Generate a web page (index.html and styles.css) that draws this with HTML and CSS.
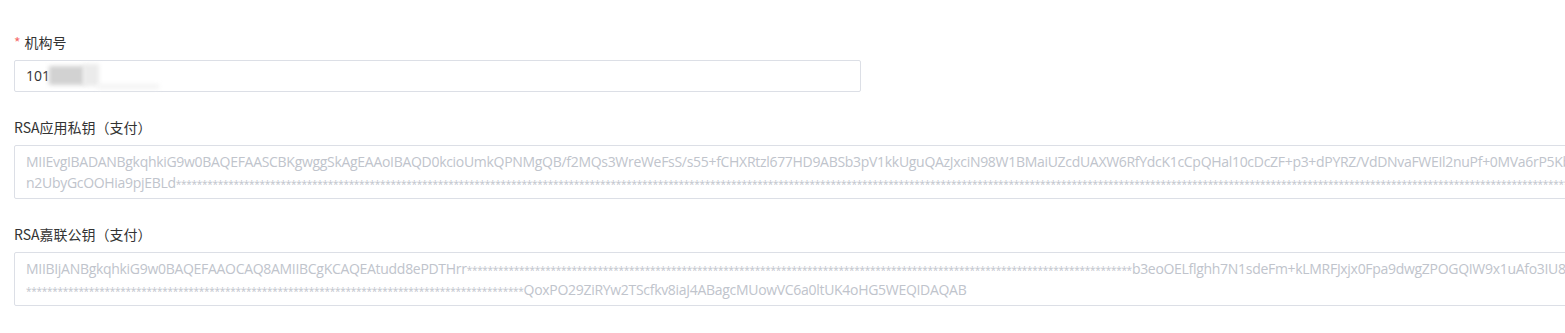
FILE: index.html
```html
<!DOCTYPE html>
<html lang="zh-CN">
<head>
<meta charset="utf-8">
<title>配置</title>
<link rel="stylesheet" href="styles.css">
</head>
<body>
<form class="form">
  <div class="form-item">
    <label class="label"><span class="required">*</span>机构号</label>
    <div class="input">
      <span class="value">101</span>
      <span class="mosaic mosaic-a"></span>
      <span class="mosaic mosaic-b"></span>
      <span class="mosaic mosaic-c"></span>
    </div>
  </div>
  <div class="form-item">
    <label class="label">RSA应用私钥（支付）</label>
    <div class="textarea">
      <div class="line">MIIEvgIBADANBgkqhkiG9w0BAQEFAASCBKgwggSkAgEAAoIBAQD0kcioUmkQPNMgQB/f2MQs3WreWeFsS/s55+fCHXRtzl677HD9ABSb3pV1kkUguQAzJxciN98W1BMaiUZcdUAXW6RfYdcK1cCpQHal10cDcZF+p3+dPYRZ/VdDNvaFWEIl2nuPf+0MVa6rP5KbQm3Yt</div>
      <div class="line">n2UbyGcOOHia9pjEBLd<span class="mask">************************************************************************************************************************************************************************************************************************************************************************************************************************************</span></div>
    </div>
  </div>
  <div class="form-item">
    <label class="label">RSA嘉联公钥（支付）</label>
    <div class="textarea">
      <div class="line">MIIBIjANBgkqhkiG9w0BAQEFAAOCAQ8AMIIBCgKCAQEAtudd8ePDTHrr<span class="mask">*******************************************************************************************************************************</span>b3eoOELflghh7N1sdeFm+kLMRFJxjx0Fpa9dwgZPOGQIW9x1uAfo3IU8<span class="mask">**********************************</span></div>
      <div class="line"><span class="mask">***********************************************************************************************</span>QoxPO29ZiRYw2TScfkv8iaJ4ABagcMUowVC6a0ltUK4oHG5WEQIDAQAB</div>
    </div>
  </div>
</form>
</body>
</html>
```

FILE: styles.css
```css
*, *::before, *::after {
  box-sizing: border-box;
}

html, body {
  margin: 0;
  padding: 0;
  background: #ffffff;
  overflow: hidden;
}

body {
  font-family: "Open Sans", "Noto Sans CJK SC", sans-serif;
  font-size: 14px;
  color: #333333;
}

.form {
  padding: 32px 0 0 14px;
  display: flex;
  flex-direction: column;
  gap: 25px;
}

.form-item {
  display: flex;
  flex-direction: column;
  gap: 8px;
}

.label {
  line-height: 20px;
  height: 20px;
  font-family: "Noto Sans CJK SC", sans-serif;
  color: #333333;
}

.required {
  color: #f56c6c;
  margin-right: 4px;
}

.input {
  position: relative;
  width: 847px;
  height: 32px;
  line-height: 30px;
  border: 1px solid #dcdfe6;
  border-radius: 2px;
  padding: 0 11px;
  color: #333333;
}

.value {
  font-family: "Open Sans", sans-serif;
}

.mosaic {
  position: absolute;
  background: #d2d2d2;
  filter: blur(2px);
}

.mosaic-a {
  left: 34px;
  top: 5px;
  width: 36px;
  height: 19px;
}

.mosaic-b {
  left: 68px;
  top: 3px;
  width: 16px;
  height: 22px;
  background: #ebebeb;
}

.mosaic-c {
  left: 82px;
  top: 23px;
  width: 62px;
  height: 5px;
  background: #f3f3f3;
}

.textarea {
  width: 1700px;
  border: 1px solid #dcdfe6;
  border-radius: 2px;
  padding: 5px 11px;
  color: #c0c4cc;
  overflow: hidden;
}

.line {
  white-space: nowrap;
  line-height: 21px;
  height: 21px;
  letter-spacing: -0.3px;
}

.mask {
  font-size: 10px;
  letter-spacing: -0.27px;
}
```
